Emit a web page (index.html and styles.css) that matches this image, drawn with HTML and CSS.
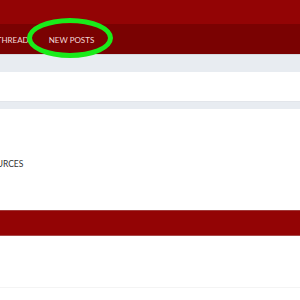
FILE: index.html
```html
<!DOCTYPE html>
<html lang="en">
<head>
    <meta charset="UTF-8">
    <title>Forum</title>
    <link rel="stylesheet" href="styles.css">
</head>
<body>
    <header class="site-header">
        <div class="header-top"></div>
        <nav class="header-nav">
            <ul class="nav-list">
                <li class="nav-item">NEW THREAD</li>
                <li class="nav-item nav-item-active">NEW POSTS
                    <span class="highlight-ring"></span>
                </li>
            </ul>
        </nav>
        <div class="sub-strip"></div>
    </header>

    <div class="breadcrumb-area"></div>
    <div class="sub-strip sub-strip-thin"></div>

    <main class="content">
        <div class="section-label">RESOURCES</div>
    </main>

    <div class="red-bar"></div>

    <footer class="footer">
        <div class="footer-line"></div>
    </footer>
</body>
</html>
```

FILE: styles.css
```css
* {
    box-sizing: border-box;
    margin: 0;
    padding: 0;
}

body {
    background-color: #fff;
    font-family: Lato, 'Liberation Sans', sans-serif;
    overflow: hidden;
}

.header-top {
    height: 24px;
    background-color: #930405;
}

.header-nav {
    height: 30px;
    background-color: #7a0202;
    display: flex;
    align-items: center;
    padding-top: 2px;
}

.nav-list {
    list-style: none;
    display: flex;
    gap: 20px;
    margin-left: -24px;
}

.nav-item {
    position: relative;
    color: #f3dada;
    font-size: 8px;
    line-height: 10px;
}

.highlight-ring {
    position: absolute;
    left: -22px;
    top: -17px;
    width: 86px;
    height: 40px;
    border: 5px solid #1aeb1a;
    border-radius: 50%;
}

.sub-strip {
    height: 18px;
    background-color: #e8ecf1;
    border-top: 1px solid #d7d9de;
}

.breadcrumb-area {
    height: 29px;
    background-color: #fff;
}

.sub-strip-thin {
    height: 8px;
    border-top: 1px solid #e2e5ea;
}

.content {
    height: 101px;
    display: flex;
    flex-direction: column;
    justify-content: center;
    padding-top: 8px;
}

.section-label {
    color: #333;
    font-size: 8.5px;
    margin-left: -25px;
}

.red-bar {
    height: 26px;
    background-color: #930405;
    border-top: 1px solid #a23a3a;
    border-bottom: 1px solid #a84848;
}

.footer {
    height: 64px;
    display: flex;
    flex-direction: column;
    justify-content: flex-end;
}

.footer-line {
    height: 1px;
    margin-bottom: 12px;
    background-color: #f4f4f4;
}
```
